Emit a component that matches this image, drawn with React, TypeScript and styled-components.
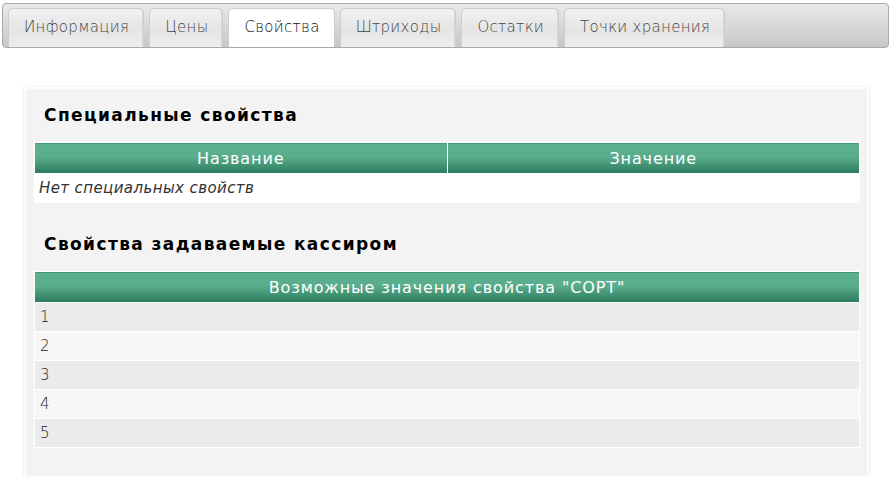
import React, { FC } from 'react';
import styled, { createGlobalStyle } from 'styled-components';

const tabs = ['Информация', 'Цены', 'Свойства', 'Штриходы', 'Остатки', 'Точки хранения'];
const values = ['1', '2', '3', '4', '5'];

const App: FC = () => {
  return (
    <>
      <GlobalStyle />
      <TabBar>
        {tabs.map((t) => (
          <Tab key={t} $active={t === 'Свойства'}>
            {t}
          </Tab>
        ))}
      </TabBar>
      <Panel>
        <Heading>Специальные свойства</Heading>
        <Table>
          <thead>
            <tr>
              <Th>Название</Th>
              <Th>Значение</Th>
            </tr>
          </thead>
          <tbody>
            <tr>
              <EmptyCell colSpan={2}>Нет специальных свойств</EmptyCell>
            </tr>
          </tbody>
        </Table>
        <Heading $gap>Свойства задаваемые кассиром</Heading>
        <Table>
          <thead>
            <tr>
              <Th>Возможные значения свойства "СОРТ"</Th>
            </tr>
          </thead>
          <tbody>
            {values.map((v, i) => (
              <Row key={v} $odd={i % 2 === 0}>
                <Td>{v}</Td>
              </Row>
            ))}
          </tbody>
        </Table>
      </Panel>
    </>
  );
};

export default App;

const GlobalStyle = createGlobalStyle`
  body {
    margin: 0;
    background: #fff;
    font-family: "DejaVu Sans", Verdana, sans-serif;
  }
`;

const TabBar = styled.div`
  display: flex;
  align-items: flex-end;
  gap: 5px;
  margin: 3px 0 0 2px;
  width: 887px;
  height: 45px;
  box-sizing: border-box;
  padding: 5px 0 0 5px;
  border: 1px solid #a9a9a9;
  border-radius: 4px;
  background: linear-gradient(#e9e9e9, #c7c7c7);
`;

const Tab = styled.div<{ $active?: boolean }>`
  height: 39px;
  box-sizing: border-box;
  display: flex;
  align-items: center;
  padding: 0 14px 2px 15px;
  border: 1px solid #cdcdcd;
  border-bottom: none;
  border-radius: 5px 5px 0 0;
  font-size: 15px;
  font-weight: 200;
  letter-spacing: 0.3px;
  color: ${(p) => (p.$active ? '#111' : '#444')};
  background: ${(p) =>
    p.$active ? '#fff' : 'linear-gradient(#f1f1f1, #e5e5e5 55%, #ededed)'};
  box-shadow: ${(p) => (p.$active ? 'none' : 'inset -1px 0 0 #d8d8d8')};
`;

const Panel = styled.div`
  margin: 39px 0 0 24px;
  width: 845px;
  box-sizing: border-box;
  padding: 16px 7px 28px 8px;
  background: #f3f3f3;
  border: 2px solid #fcfcfc;
  box-shadow: 0 0 3px rgba(0, 0, 0, 0.12);
`;

const Heading = styled.h2<{ $gap?: boolean }>`
  margin: ${(p) => (p.$gap ? '31px' : '0')} 0 17px 10px;
  font-size: 17px;
  line-height: 20px;
  font-weight: bold;
  letter-spacing: 1.4px;
  color: #000;
`;

const Table = styled.table`
  width: 100%;
  border-collapse: collapse;
  border: 1px solid #fff;
  table-layout: fixed;
`;

const Th = styled.th`
  height: 30px;
  padding: 0;
  font-weight: normal;
  font-size: 16px;
  letter-spacing: 0.9px;
  color: #fff;
  text-align: center;
  border-left: 1px solid #fff;
  background: linear-gradient(#5db08f 0%, #5aad8c 45%, #2b7a5c 100%);
  &:first-child {
    border-left: none;
  }
`;

const EmptyCell = styled.td`
  height: 29px;
  padding: 0 4px;
  background: #fff;
  font-style: italic;
  font-weight: 200;
  font-size: 15px;
  letter-spacing: 0.4px;
  color: #333;
`;

const Row = styled.tr<{ $odd?: boolean }>`
  background: ${(p) => (p.$odd ? '#ebebeb' : '#f7f7f7')};
  border-top: 1px solid #fff;
`;

const Td = styled.td`
  height: 28px;
  padding: 0 5px;
  font-size: 15px;
  font-weight: 200;
  color: #222;
`;
